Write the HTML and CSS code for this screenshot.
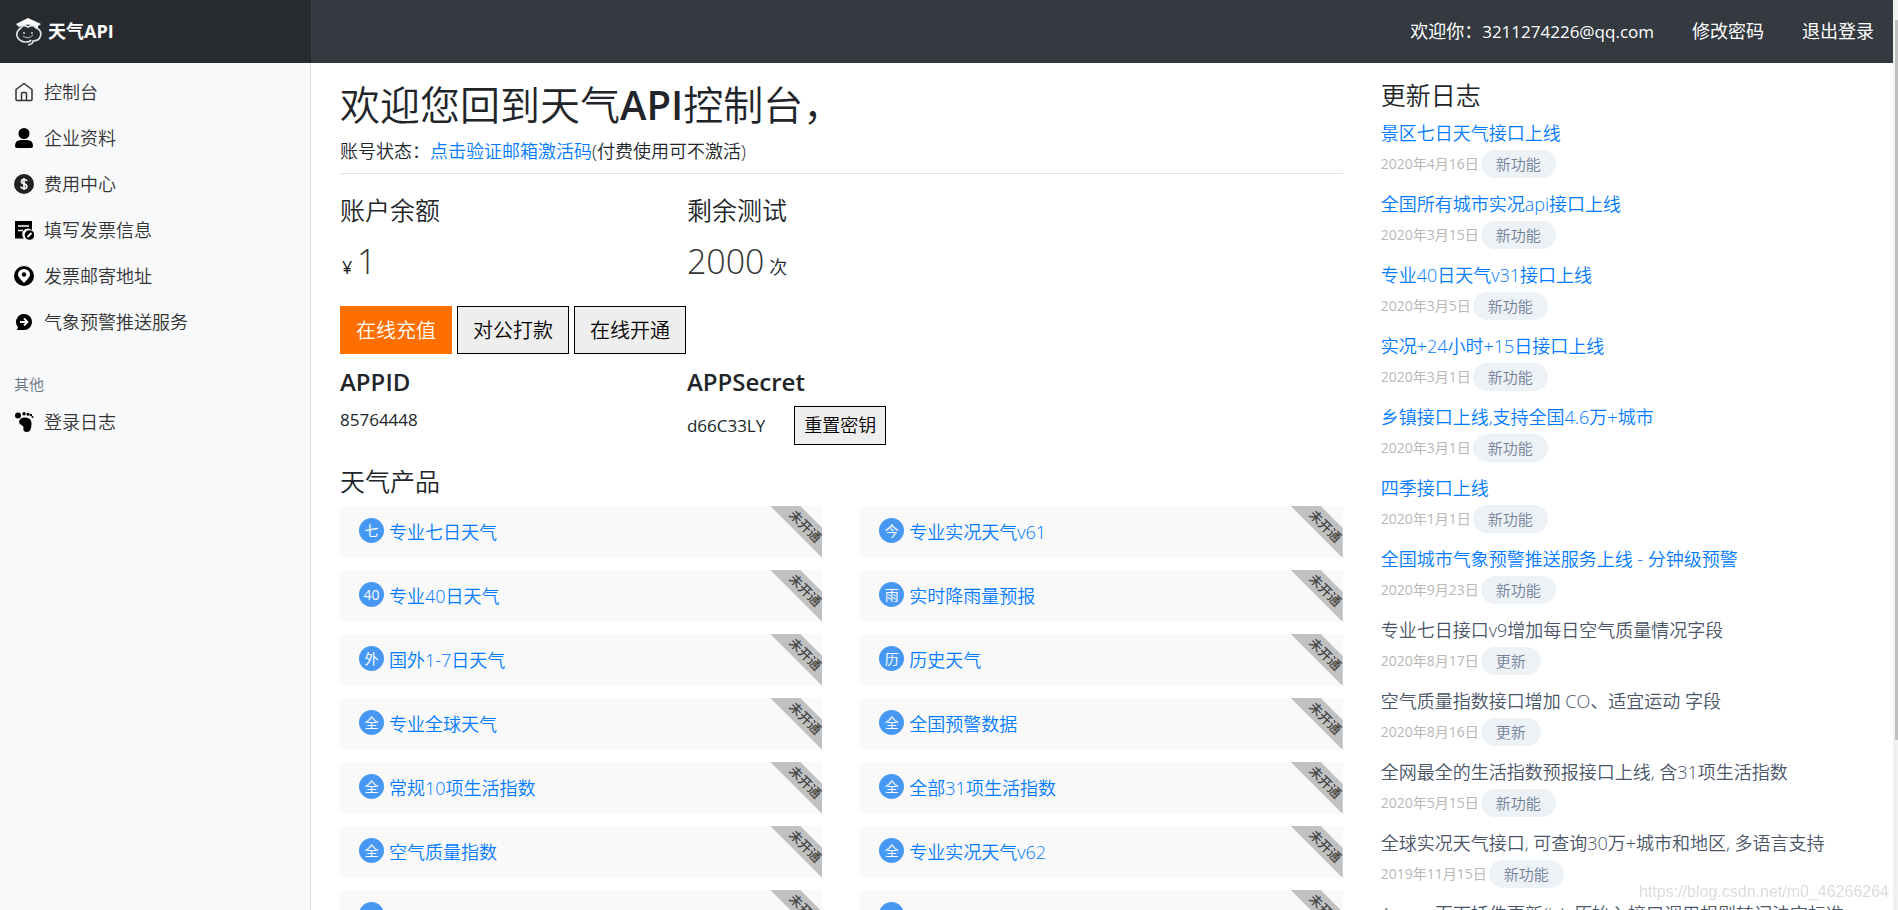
FILE: index.html
```html
<!DOCTYPE html>
<html lang="zh-CN">
<head>
<meta charset="utf-8">
<title>天气API控制台</title>
<link rel="stylesheet" href="styles.css">
</head>
<body>
<header class="topbar">
  <a class="brand" href="#">
    <svg class="brand-mark" viewBox="0 0 26 28" aria-hidden="true">
      <path d="M0 6L12 0L25 6L22 8V11L18 8Q12 5 6 8L3 9Z" fill="#fff"/>
      <path d="M5 10Q7 6 12 9Q18 6 20 10Q26 12 24.500 18Q23 23 17 23Q17 26 12 27M5 10Q0 13 1 18Q3 24 10 24Q14 24 15 22" fill="none" stroke="#dfe1e3" stroke-width="1.700"/>
      <path d="M7 18Q12 22 17 17" fill="none" stroke="#b9bcc0"/>
      <circle cx="8" cy="15" r="1" fill="#ccc"/><circle cx="16" cy="15" r="1" fill="#ccc"/>
    </svg>
    <span>天气API</span>
  </a>
  <nav class="topnav">
    <a href="#">欢迎你：<span class="latin">3211274226@qq.com</span></a>
    <a href="#">修改密码</a>
    <a href="#">退出登录</a>
  </nav>
</header>
<div class="shell">
  <nav class="sidebar">
    <a href="#"><svg viewBox="0 0 20 20"><path d="M2 7.500L10 1.500L18 7.500V17.500Q18 18.500 17 18.500H3Q2 18.500 2 17.500ZM7.500 18.500V11.500Q7.500 10.500 8.500 10.500H11.500Q12.500 10.500 12.500 11.500V18.500" fill="none" stroke="#333" stroke-width="1.500" stroke-linejoin="round"/></svg>控制台</a>
    <a href="#"><svg viewBox="0 0 20 20"><circle cx="10" cy="5.500" r="5.500"/><path d="M1 18Q1 12 7 12H13Q19 12 19 18Q19 20 17 20H3Q1 20 1 18Z"/></svg>企业资料</a>
    <a href="#"><svg viewBox="0 0 20 20"><circle cx="10" cy="10" r="10" fill="#222"/><path d="M13 7Q12.500 5.500 10 5.500Q7.500 5.500 7.500 7.500Q7.500 9.300 10 9.800Q12.800 10.400 12.800 12.400Q12.800 14.500 10 14.500Q7.200 14.500 7 12.500M10 4V16" fill="none" stroke="#fff" stroke-width="1.700"/></svg>费用中心</a>
    <a href="#"><svg viewBox="0 0 20 20"><path d="M1 1H18V10A5.500 5.500 0 0 0 10 18.500H1Z"/><path d="M4 6H15M4 10.500H9" stroke="#fff" stroke-width="1.500"/><circle cx="15.500" cy="15" r="4.800"/><path d="M13.500 17L17.500 13" stroke="#fff" stroke-width="1.800"/></svg>填写发票信息</a>
    <a href="#"><svg viewBox="0 0 20 20"><circle cx="10" cy="10" r="10"/><path d="M10 17Q4 11 4 8.500A6 5.500 0 0 1 16 8.500Q16 11 10 17Z" fill="#fff"/><circle cx="10" cy="8.500" r="2.300"/></svg>发票邮寄地址</a>
    <a href="#"><svg viewBox="0 0 20 20"><path d="M10 2A8 8 0 1 1 10 18H3L4 15.300A8 8 0 0 1 10 2Z"/><path d="M6 10H13.500M10 6.500L13.500 10L10 13.500" fill="none" stroke="#fff" stroke-width="1.800"/></svg>气象预警推送服务</a>
    <h6>其他</h6>
    <a href="#"><svg viewBox="0 0 20 20"><circle cx="4" cy="3.500" r="3"/><circle cx="10" cy="1.800" r="1.700"/><circle cx="14" cy="2.300" r="1.500"/><circle cx="17" cy="3" r="1.200"/><circle cx="18.500" cy="5" r="1"/><path d="M5 9.500Q6 5.500 11 5.500Q17.500 5.500 17.500 11.500Q17.500 20 13 20Q8.500 20 9.500 15.500Q10 14.500 7.500 13Q5 12 5 9.500Z"/></svg>登录日志</a>
  </nav>
  <main class="content">
    <section class="primary">
      <h1>欢迎您回到天气<b>API</b>控制台，</h1>
      <p class="status">账号状态：<a href="#">点击验证邮箱激活码</a>(付费使用可不激活)</p>
      <div class="stats">
        <div><h4>账户余额</h4><p class="amount"><small class="yen">¥</small> <span>1</span></p></div>
        <div><h4>剩余测试</h4><p class="amount"><span>2000</span> <small>次</small></p></div>
      </div>
      <div class="actions">
        <button class="pay" type="button">在线充值</button>
        <button type="button">对公打款</button>
        <button type="button">在线开通</button>
      </div>
      <div class="stats keys">
        <div><h4>APPID</h4><p class="latin">85764448</p></div>
        <div><h4>APPSecret</h4><p class="secret"><span class="latin">d66C33LY</span><button type="button">重置密钥</button></p></div>
      </div>
      <h4 class="products-title">天气产品</h4>
      <div class="products">
        <div class="card"><i>七</i><a href="#">专业七日天气</a><span class="ribbon"><b>未开通</b></span></div>
        <div class="card"><i>今</i><a href="#">专业实况天气v61</a><span class="ribbon"><b>未开通</b></span></div>
        <div class="card"><i>40</i><a href="#">专业40日天气</a><span class="ribbon"><b>未开通</b></span></div>
        <div class="card"><i>雨</i><a href="#">实时降雨量预报</a><span class="ribbon"><b>未开通</b></span></div>
        <div class="card"><i>外</i><a href="#">国外1-7日天气</a><span class="ribbon"><b>未开通</b></span></div>
        <div class="card"><i>历</i><a href="#">历史天气</a><span class="ribbon"><b>未开通</b></span></div>
        <div class="card"><i>全</i><a href="#">专业全球天气</a><span class="ribbon"><b>未开通</b></span></div>
        <div class="card"><i>全</i><a href="#">全国预警数据</a><span class="ribbon"><b>未开通</b></span></div>
        <div class="card"><i>全</i><a href="#">常规10项生活指数</a><span class="ribbon"><b>未开通</b></span></div>
        <div class="card"><i>全</i><a href="#">全部31项生活指数</a><span class="ribbon"><b>未开通</b></span></div>
        <div class="card"><i>全</i><a href="#">空气质量指数</a><span class="ribbon"><b>未开通</b></span></div>
        <div class="card"><i>全</i><a href="#">专业实况天气v62</a><span class="ribbon"><b>未开通</b></span></div>
        <div class="card"><i></i><span class="ribbon"><b>未开通</b></span></div>
        <div class="card"><i></i><span class="ribbon"><b>未开通</b></span></div>
      </div>
    </section>
    <aside class="log">
      <h4>更新日志</h4>
      <article><a href="#">景区七日天气接口上线</a><p><time>2020年4月16日</time><span>新功能</span></p></article>
      <article><a href="#">全国所有城市实况api接口上线</a><p><time>2020年3月15日</time><span>新功能</span></p></article>
      <article><a href="#">专业40日天气v31接口上线</a><p><time>2020年3月5日</time><span>新功能</span></p></article>
      <article><a href="#">实况+24小时+15日接口上线</a><p><time>2020年3月1日</time><span>新功能</span></p></article>
      <article><a href="#">乡镇接口上线,支持全国4.6万+城市</a><p><time>2020年3月1日</time><span>新功能</span></p></article>
      <article><a href="#">四季接口上线</a><p><time>2020年1月1日</time><span>新功能</span></p></article>
      <article><a href="#">全国城市气象预警推送服务上线 - 分钟级预警</a><p><time>2020年9月23日</time><span>新功能</span></p></article>
      <article><h5>专业七日接口v9增加每日空气质量情况字段</h5><p><time>2020年8月17日</time><span>更新</span></p></article>
      <article><h5>空气质量指数接口增加 CO、适宜运动 字段</h5><p><time>2020年8月16日</time><span>更新</span></p></article>
      <article><h5>全网最全的生活指数预报接口上线, 含31项生活指数</h5><p><time>2020年5月15日</time><span>新功能</span></p></article>
      <article><h5>全球实况天气接口, 可查询30万+城市和地区, 多语言支持</h5><p><time>2019年11月15日</time><span>新功能</span></p></article>
      <article><h5>Amaze页面插件更新(js), 原始入接口调用规则转词法空标准</h5></article>
    </aside>
  </main>
</div>
<div class="scrollbar" aria-hidden="true"></div>
<div class="watermark">https://blog.csdn.net/m0_46266264</div>
</body>
</html>
```

FILE: styles.css
```css
* { box-sizing: border-box; }
body {
  margin: 0;
  height: 100vh;
  overflow: hidden;
  padding-right: 5px;
  display: flex;
  flex-direction: column;
  font: 350 18px/27px "Open Sans", "Noto Sans CJK SC", sans-serif;
  color: #212529;
  background: #fff;
}
a { color: #007bff; text-decoration: none; }
h1, h4, h5, h6, p { margin: 0; font-weight: inherit; }
.latin { font-size: 17px; font-weight: 400; }

.topbar { display: flex; flex: none; height: 63px; background: #343a40; }
.brand {
  width: 311px;
  padding-left: 16px;
  display: flex;
  align-items: center;
  gap: 6px;
  background: #272b30;
  color: #fff;
  font-size: 18px;
  font-weight: 700;
}
.brand-mark { width: 26px; height: 28px; }
.topnav {
  flex: 1;
  display: flex;
  justify-content: flex-end;
  align-items: center;
  gap: 38px;
  padding-right: 19px;
}
.topnav a { color: #fff; font-weight: 400; }

.shell { flex: 1; min-height: 0; display: flex; }
.sidebar {
  flex: none;
  width: 311px;
  padding: 6px 14px;
  background: #f8f9fb;
  border-right: 1px solid #dcdddf;
}
.sidebar a {
  display: flex;
  align-items: center;
  gap: 10px;
  height: 46px;
  color: #333;
}
.sidebar svg { width: 20px; height: 20px; }
.sidebar h6 {
  margin: 28px 0 4px;
  font-size: 15px;
  line-height: 22px;
  color: #6c757d;
}

.content {
  flex: 1;
  min-width: 0;
  display: grid;
  grid-template-columns: 2fr 1fr;
  gap: 38px;
  padding: 18px 11px 0 29px;
}
h1 { font-size: 40px; line-height: 48px; font-weight: 350; }
h1 b { font-weight: 600; }
.status { padding: 9px 0 8px; border-bottom: 1px solid #dee2e6; }
h4 { font-size: 25px; line-height: 30px; font-weight: 350; }
.stats { display: grid; grid-template-columns: repeat(3, 1fr); gap: 38px; padding-top: 21px; }
.amount { padding: 11px 0 14px; line-height: 50px; }
.amount span { font-size: 34px; color: #333; }
.yen { padding-left: 2px; font-weight: 400; }
small { font-size: 18px; }
.actions { display: flex; gap: 5px; }
button {
  height: 48px;
  padding: 0 15px;
  border: 1px solid #000;
  background: #eee;
  color: #000;
  font: inherit;
  font-size: 20px;
}
.pay { background: #ff6f00; border-color: #ff6f00; color: #fff; }
.keys { padding-top: 13px; }
.keys h4 { font-size: 24px; font-weight: 600; }
.keys p { padding-top: 9px; }
.keys .secret { display: flex; align-items: center; gap: 29px; }
.secret button { height: 39px; padding: 0 9px; font-size: 18px; }
.products-title { padding: 21px 0 10px; line-height: 30px; }
.products { display: grid; grid-template-columns: 1fr 1fr; gap: 12px 38px; }
.card {
  position: relative;
  height: 52px;
  padding-left: 19px;
  display: flex;
  align-items: center;
  gap: 5px;
  background: #f9f9f9;
}
.card i {
  width: 25px;
  height: 25px;
  margin-bottom: 4px;
  border-radius: 50%;
  background: #4798f3;
  color: #fff;
  font: 400 14px/25px "Open Sans", "Noto Sans CJK SC", sans-serif;
  text-align: center;
}
.ribbon {
  position: absolute;
  top: 0;
  right: 0;
  width: 52px;
  height: 52px;
  display: grid;
  place-items: center;
  background: #c1c1c1;
  clip-path: polygon(0 0, 30px 0, 100% 22px, 100% 100%);
}
.ribbon b {
  font-size: 13px;
  font-weight: 500;
  line-height: 16px;
  color: #444;
  white-space: nowrap;
  transform: translate(9px, -6px) rotate(45deg);
}

.log h4 { padding-bottom: 9px; line-height: 29px; }
.log article { height: 71px; white-space: nowrap; }
.log article > a, .log h5 { display: block; font-size: 18px; line-height: 27px; padding-top: 1px; }
.log h5 { color: #4a5568; }
.log p { display: flex; align-items: center; gap: 2px; font-size: 15px; padding-top: 3px; }
.log time { color: #b8b8b8; font-size: 14px; font-weight: 400; line-height: 28px; }
.log p span {
  padding: 0 15px;
  border-radius: 14px;
  background: #edf2f7;
  color: #718096;
  line-height: 28px;
}

.scrollbar {
  position: fixed;
  top: 0;
  right: 0;
  width: 5px;
  height: 100%;
  background: linear-gradient(#c1c1c1, #c1c1c1) 2px 20px / 3px 720px no-repeat #f1f1f1;
}
.watermark {
  position: fixed;
  right: 9px;
  bottom: 8px;
  font: 16px/20px "Liberation Sans", sans-serif;
  color: #dcdcdc;
}
```
